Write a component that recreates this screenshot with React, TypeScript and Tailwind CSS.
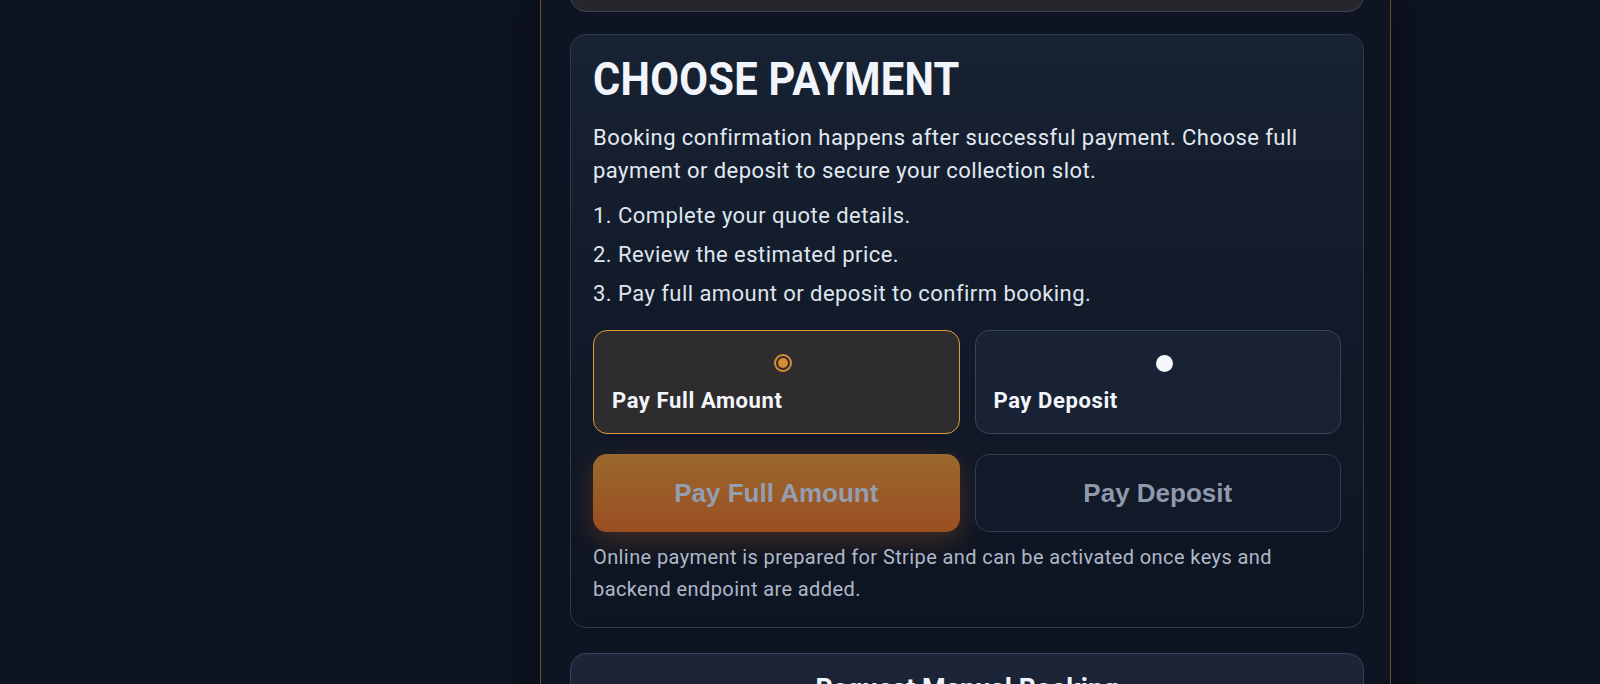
import { useState } from "react";

const body = { fontFamily: "Roboto, 'Liberation Sans', sans-serif" };
const arial = { fontFamily: "'Liberation Sans', Arial, sans-serif" };

function Radio({ checked }: { checked: boolean }) {
    if (checked) {
        return (
            <span className="flex size-[18px] items-center justify-center rounded-full border-2 border-[#d88c33] bg-[#2e2c2d]">
                <span className="size-[10px] rounded-full bg-[#d88c33]" />
            </span>
        );
    }
    return <span className="size-[17px] rounded-full bg-[#f4f7fc]" />;
}

export default function App() {
    const [choice, setChoice] = useState<"full" | "deposit">("full");

    const options = [
        { id: "full" as const, label: "Pay Full Amount" },
        { id: "deposit" as const, label: "Pay Deposit" },
    ];

    return (
        <div className="h-[684px] w-full overflow-hidden bg-[#0d1320]" style={body}>
            <div className="grid h-full grid-cols-[540px_851px_1fr]">
                <div />
                <div className="flex h-full flex-col border-x border-[#6a5230] bg-[#0e1421] pl-[29px] pr-[26px] shadow-[0_0_40px_rgba(0,0,0,0.45)]">
                    <div className="-mt-[100px] h-[112px] shrink-0 rounded-2xl border border-[#3a4658] bg-gradient-to-b from-[#262629] to-[#25272c]" />

                    <section className="mt-[22px] shrink-0 rounded-2xl border border-[#2c3a4e] bg-gradient-to-b from-[#172232] via-[#121a29] to-[#0e1421] px-[22px] pt-[17px] pb-[22px]">
                        <h2 className="inline-block origin-left scale-x-[0.887] text-[47px] font-bold leading-[1.15] tracking-[0.3px] whitespace-nowrap text-[#f1f5fb]">
                            CHOOSE PAYMENT
                        </h2>
                        <p className="mt-[15px] text-[22px] leading-[33px] tracking-[0.45px] text-[#e3e9f2]">
                            Booking confirmation happens after successful payment. Choose full payment or deposit to secure your collection slot.
                        </p>
                        <ol className="mt-[12px] flex list-inside list-decimal flex-col gap-[6px] text-[22px] leading-[33px] tracking-[0.45px] text-[#dfe5ee]">
                            <li>Complete your quote details.</li>
                            <li>Review the estimated price.</li>
                            <li>Pay full amount or deposit to confirm booking.</li>
                        </ol>

                        <div className="mt-[20px] grid grid-cols-2 gap-[15px]">
                            {options.map((o) => {
                                const active = choice === o.id;
                                return (
                                    <button
                                        key={o.id}
                                        onClick={() => setChoice(o.id)}
                                        className={
                                            active
                                                ? "flex h-[104px] flex-col rounded-[14px] border border-[#e09a3e] bg-[#2e2c2d] px-[18px] pt-[22px] text-left"
                                                : "flex h-[104px] flex-col rounded-[14px] border border-[#34445a] bg-[#182234] px-[18px] pt-[22px] text-left"
                                        }
                                    >
                                        <span className="flex h-[20px] w-full items-center justify-center pl-[14px]">
                                            <Radio checked={active} />
                                        </span>
                                        <span className="mt-[15px] text-[22px] font-bold leading-[25px] tracking-[0.6px] text-[#f3f6fb]">
                                            {o.label}
                                        </span>
                                    </button>
                                );
                            })}
                        </div>

                        <div className="mt-[20px] grid grid-cols-2 gap-[15px]">
                            <button
                                className="h-[78px] rounded-[14px] bg-gradient-to-b from-[#9a682d] to-[#9a4e22] text-[26px] font-bold text-[#949eb1] shadow-[0_8px_26px_rgba(196,108,38,0.28)]"
                                style={arial}
                            >
                                Pay Full Amount
                            </button>
                            <button
                                className="h-[78px] rounded-[14px] border border-[#2f3c50] bg-[#121a29] text-[26px] font-bold text-[#8f99ab]"
                                style={arial}
                            >
                                Pay Deposit
                            </button>
                        </div>

                        <p className="mt-[9px] max-w-[730px] text-[20px] leading-[32px] tracking-[0.4px] text-[#aeb8c8]">
                            Online payment is prepared for Stripe and can be activated once keys and backend endpoint are added.
                        </p>
                    </section>

                    <section className="mt-[25px] h-[200px] shrink-0 rounded-2xl border border-[#34425a] bg-gradient-to-b from-[#1c2638] to-[#141c2b] pt-[15px] text-center">
                        <h3 className="text-[27px] font-bold text-[#f1f5fb]">Request Manual Booking</h3>
                    </section>
                </div>
                <div />
            </div>
        </div>
    );
}
